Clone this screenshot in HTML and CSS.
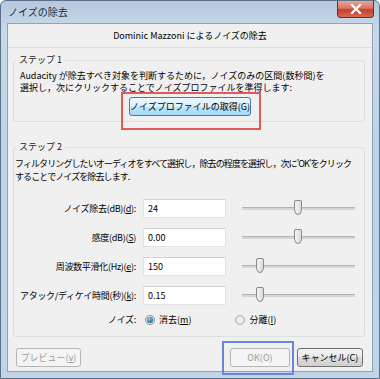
FILE: index.html
```html
<!DOCTYPE html>
<html lang="ja">
<head>
<meta charset="utf-8">
<link rel="stylesheet" href="styles.css">
</head>
<body>
<div class="window">
  <div class="titlebar">
    <span class="title">ノイズの除去</span>
    <span class="close"><svg width="12" height="10" viewBox="0 0 12 10"><path d="M2 1 L10 9 M10 1 L2 9" stroke="#fff" stroke-width="2.2" stroke-linecap="square"/></svg></span>
  </div>
  <div class="client">
    <div class="header">Dominic Mazzoni によるノイズの除去</div>
    <fieldset class="group g1">
      <legend>ステップ 1</legend>
      <p class="desc d1">Audacity が除去すべき対象を判断するために，ノイズのみの区間(数秒間)を<br>選択し，次にクリックすることでノイズプロファイルを準得します:</p>
      <div class="btnrow">
        <span class="btn hot">ノイズプロファイルの取得(G)</span>
      </div>
    </fieldset>
    <fieldset class="group g2">
      <legend>ステップ 2</legend>
      <p class="desc d2">フィルタリングしたいオーディオをすべて選択し，除去の程度を選択し，次に'OK'をクリック<br>することでノイズを除去します.</p>
      <div class="rows">
        <div class="row">
          <span class="lbl">ノイズ除去(dB)(<u>d</u>):</span>
          <span class="input">24</span>
          <span class="slider"><span class="thumb" style="left:52px"></span></span>
        </div>
        <div class="row">
          <span class="lbl">感度(dB)(<u>S</u>)</span>
          <span class="input">0.00</span>
          <span class="slider"><span class="thumb" style="left:52px"></span></span>
        </div>
        <div class="row">
          <span class="lbl">周波数平滑化(Hz)(<u>e</u>):</span>
          <span class="input">150</span>
          <span class="slider"><span class="thumb" style="left:14px"></span></span>
        </div>
        <div class="row">
          <span class="lbl">アタック/ディケイ時間(秒)(<u>k</u>):</span>
          <span class="input">0.15</span>
          <span class="slider"><span class="thumb" style="left:14px"></span></span>
        </div>
        <div class="row radios">
          <span class="lbl">ノイズ:</span>
          <span class="radio on"></span><span class="rtext">消去(<u>m</u>)</span>
          <span class="radio off"></span><span class="rtext">分離(<u>I</u>)</span>
        </div>
      </div>
    </fieldset>
    <div class="footer">
      <span class="btn dis preview">プレビュー(<u>v</u>)</span>
      <span class="spacer"></span>
      <span class="btn dis ok">OK(O)</span>
      <span class="btn cancel">キャンセル(C)</span>
    </div>
  </div>
</div>
</body>
</html>
```
FILE: styles.css
```css
html, body {
  margin: 0;
  padding: 0;
  background: #ffffff;
}
body {
  font-family: "Noto Sans CJK JP", "Noto Sans", sans-serif;
  font-size: 9px;
  color: #000;
}
.window {
  width: 378px;
  height: 377px;
  border: 1px solid #5b6f86;
  border-radius: 6px 6px 0 0;
  background: linear-gradient(180deg, #b4c9df 0%, #c9d9ea 8%, #bfd2e6 40%, #c2d4e7 100%);
  display: flex;
  flex-direction: column;
  box-sizing: content-box;
}
.titlebar {
  height: 22px;
  display: flex;
  align-items: flex-start;
  justify-content: space-between;
  padding-left: 7px;
  padding-right: 5px;
}
.title {
  font-size: 10px;
  line-height: 22px;
  color: #1e2a38;
}
.close {
  width: 37px;
  height: 17px;
  box-sizing: border-box;
  border: 1px solid #6b2d2a;
  border-top: none;
  border-radius: 0 0 4px 4px;
  background: linear-gradient(180deg, #e8a694 0%, #d4765f 45%, #c0402b 55%, #d86a4f 100%);
  display: flex;
  align-items: center;
  justify-content: center;
}
.client {
  margin: 0 6px 0 6px;
  height: 349px;
  box-sizing: border-box;
  border: 1px solid #8fa3b9;
  background: #f0f0f0;
  display: flex;
  flex-direction: column;
  position: relative;
}
.header {
  height: 23px;
  line-height: 24px;
  text-align: center;
  border-bottom: 1px solid #dcdcdc;
}
.group {
  margin: 0;
  margin-left: 5px;
  margin-right: 7px;
  border: 1px solid #d5dfe5;
  border-radius: 3px;
  padding: 0;
}
.g1 {
  margin-top: 6px;
  height: 68px;
  box-sizing: border-box;
}
.g2 {
  margin-top: 19px;
  height: 196px;
  box-sizing: border-box;
}
legend {
  padding: 0 3px;
  margin-left: 2px;
  line-height: 12px;
  color: #1a1a1a;
}
.desc {
  margin: 0;
  white-space: nowrap;
  line-height: 12.5px;
}
.d1 {
  padding: 4px 0 0 6px;
  line-height: 12px;
}
.d2 {
  padding: 5px 0 0 1px;
  letter-spacing: -0.9px;
}
.btnrow {
  display: flex;
  justify-content: center;
  padding-top: 3px;
  padding-left: 2px;
}
.btn {
  display: inline-flex;
  align-items: center;
  justify-content: center;
  box-sizing: border-box;
  height: 19px;
  border: 1px solid #707070;
  border-radius: 3px;
  background: linear-gradient(180deg, #f2f2f2 0%, #ebebeb 50%, #dddddd 50%, #cfcfcf 100%);
  white-space: nowrap;
}
.btn.hot {
  width: 122px;
  border-color: #3c7fb1;
  background: linear-gradient(180deg, #eaf6fd 0%, #d9f0fc 50%, #bee6fd 50%, #a7d9f5 100%);
  position: relative;
}
.btn.hot::after {
  content: "";
  position: absolute;
  left: -9px;
  right: -11px;
  top: -6px;
  bottom: -15px;
  border: 2px solid #e05a5a;
}
.rows {
  display: flex;
  flex-direction: column;
  padding-top: 16px;
}
.row {
  display: flex;
  align-items: center;
  height: 19px;
  margin-bottom: 10px;
}
.lbl {
  width: 122px;
  text-align: right;
  white-space: nowrap;
  letter-spacing: -0.3px;
}
.input {
  margin-left: 7px;
  width: 83px;
  height: 19px;
  box-sizing: border-box;
  background: #fff;
  border: 1px solid #e3e3e3;
  border-top-color: #d0d0d0;
  padding-left: 4px;
  line-height: 17px;
}
.slider {
  margin-left: 16px;
  width: 113px;
  height: 2px;
  background: #d6d6d6;
  border-top: 1px solid #b4b4b4;
  position: relative;
}
.thumb {
  position: absolute;
  top: -8px;
  width: 8px;
  height: 15px;
  box-sizing: border-box;
  border: 1px solid #8a8a8a;
  border-radius: 2px 2px 4px 4px / 2px 2px 6px 6px;
  background: linear-gradient(90deg, #f4f4f4, #dcdcdc);
}
.radios {
  margin-top: -5px;
}
.radio {
  width: 10px;
  height: 10px;
  box-sizing: border-box;
  border-radius: 50%;
  border: 1px solid #8e8f8f;
  background: radial-gradient(circle, #f4f4f4 0%, #dcdcdc 100%);
  margin-left: 9px;
  position: relative;
}
.radio.on::after {
  content: "";
  position: absolute;
  left: 1px;
  top: 1px;
  width: 6px;
  height: 6px;
  border-radius: 50%;
  background: radial-gradient(circle at 40% 35%, #8fd3ff 0%, #2a7cb5 55%, #1d4f7a 100%);
}
.radio.off {
  margin-left: 44px;
  border-color: #b0b0b0;
}
.rtext {
  margin-left: 4px;
}
.footer {
  display: flex;
  align-items: center;
  padding: 0 9px 0 8px;
  margin-top: 11px;
}
.btn.dis {
  color: #9a9a9a;
  border-color: #b5b5b5;
  background: #f4f4f4;
}
.preview {
  width: 65px;
}
.spacer {
  flex: 1;
}
.ok {
  width: 60px;
  position: relative;
}
.ok::after {
  content: "";
  position: absolute;
  left: -9px;
  right: -5px;
  top: -8px;
  bottom: -9px;
  border: 2px solid #6a86d8;
}
.cancel {
  width: 66px;
  margin-left: 7px;
}
u {
  text-decoration-thickness: 1px;
  text-underline-offset: 1px;
}
```
